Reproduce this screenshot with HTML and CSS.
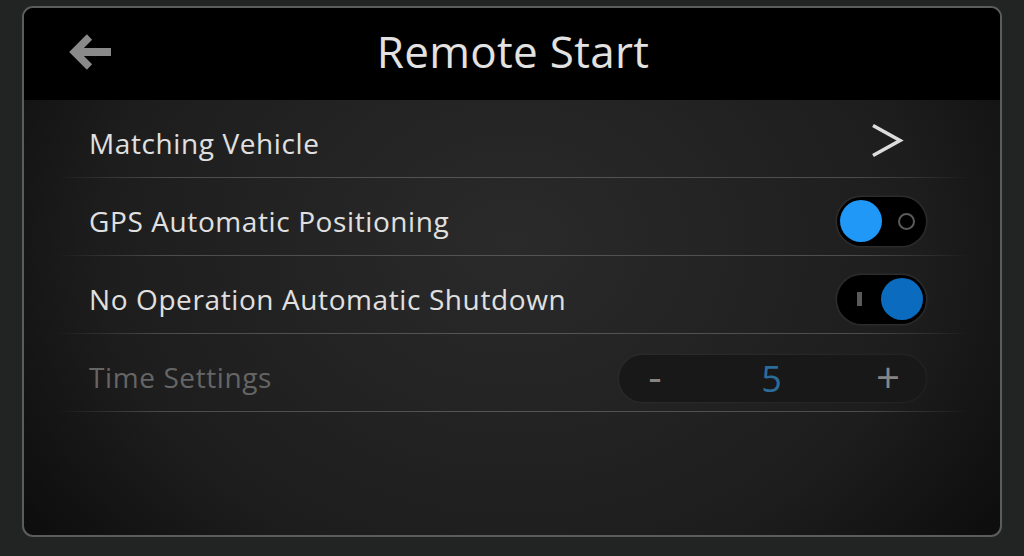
FILE: index.html
```html
<!DOCTYPE html>
<html>
<head>
<meta charset="utf-8">
<link rel="stylesheet" href="styles.css">
</head>
<body>
<div class="panel">
  <header class="header">
    <svg class="back" width="44" height="38" viewBox="0 0 44 38">
      <path d="M20.5 3 L5.5 18 L20.5 33" fill="none" stroke="#8a8a8a" stroke-width="7.5" stroke-linejoin="miter"/>
      <path d="M8 18 H42" stroke="#8a8a8a" stroke-width="8"/>
    </svg>
    <h1 class="title">Remote Start</h1>
  </header>
  <div class="list">
    <div class="row">
      <span class="label">Matching Vehicle</span>
      <svg class="chev" width="34" height="36" viewBox="0 0 34 36">
        <path d="M3 2.5 L30 17.5 L3 32.5" fill="none" stroke="#dcdcdc" stroke-width="3.6" stroke-linejoin="miter"/>
      </svg>
    </div>
    <div class="row">
      <span class="label">GPS Automatic Positioning</span>
      <div class="toggle">
        <span class="knob knob-on"></span>
        <span class="ring"></span>
      </div>
    </div>
    <div class="row">
      <span class="label">No Operation Automatic Shutdown</span>
      <div class="toggle toggle-right">
        <span class="bar"></span>
        <span class="knob knob-dark"></span>
      </div>
    </div>
    <div class="row">
      <span class="label label-dim">Time Settings</span>
      <div class="stepper">
        <span class="minus">-</span>
        <span class="value">5</span>
        <span class="plus">+</span>
      </div>
    </div>
  </div>
</div>
</body>
</html>
```
FILE: styles.css
```css
* { box-sizing: border-box; }
html, body {
  margin: 0;
  padding: 0;
  background: #222424;
  width: 1024px;
  height: 556px;
  overflow: hidden;
  font-family: "Open Sans", "Noto Sans", sans-serif;
}
body {
  padding: 6px 22px 0 22px;
}
.panel {
  width: 980px;
  height: 531px;
  border: 2px solid #5c5c5c;
  border-radius: 11px;
  overflow: hidden;
  background: radial-gradient(ellipse 60% 90% at 50% 45%, #2a2a2a 0%, #1d1d1d 70%, #0e0e0e 100%);
  display: flex;
  flex-direction: column;
}
.header {
  height: 92px;
  background: #000;
  display: flex;
  align-items: center;
  justify-content: center;
  position: relative;
  flex-shrink: 0;
}
.back {
  position: absolute;
  left: 45px;
  top: 26px;
}
.title {
  margin: 0;
  font-weight: 400;
  font-size: 44px;
  color: #e2e2e2;
  letter-spacing: 0.3px;
  padding-left: 2px;
  margin-top: -6px;
}
.list {
  display: flex;
  flex-direction: column;
  padding: 0 30px 0 32px;
}
.row {
  height: 78px;
  display: flex;
  align-items: center;
  justify-content: space-between;
  padding: 8px 44px 0 33px;
  position: relative;
}
.row::after {
  content: "";
  position: absolute;
  left: 0;
  right: 0;
  bottom: 0;
  height: 1px;
  background: linear-gradient(90deg, rgba(90,90,90,0) 0%, #4c4c4c 12%, #555 50%, #4c4c4c 88%, rgba(90,90,90,0) 100%);
}
.label {
  font-size: 28px;
  letter-spacing: 0.6px;
  color: #e0e0e0;
}
.label-dim { color: #656565; }
.chev {
  margin-right: 22px;
  margin-top: -4px;
}
.toggle {
  width: 89px;
  height: 49px;
  border-radius: 25px;
  background: #000;
  box-shadow: 0 0 3px rgba(120,120,120,0.5);
  display: flex;
  align-items: center;
  justify-content: space-between;
  padding: 0 11px 0 3px;
}
.toggle-right {
  padding: 0 3px 0 20px;
}
.knob {
  width: 42px;
  height: 42px;
  border-radius: 50%;
}
.knob-on { background: #1f98f7; }
.knob-dark { background: #0a6bbf; }
.ring {
  width: 17px;
  height: 17px;
  border-radius: 50%;
  border: 2px solid #5a5a5a;
}
.bar {
  width: 5px;
  height: 14px;
  background: #5a5a5a;
}
.stepper {
  width: 307px;
  height: 47px;
  border-radius: 24px;
  background: #181818;
  box-shadow: 0 0 3px rgba(80,80,80,0.4);
  display: flex;
  align-items: center;
  justify-content: space-between;
  padding: 0 24px 0 22px;
  margin-top: 2px;
}
.minus, .plus {
  color: #858585;
  font-size: 42px;
  line-height: 1;
  width: 28px;
  text-align: center;
}
.minus { margin-top: -4px; }
.plus { margin-top: -2px; }
.value {
  color: #2c6c9a;
  font-size: 36px;
  line-height: 1;
  padding-top: 2px;
}
```
